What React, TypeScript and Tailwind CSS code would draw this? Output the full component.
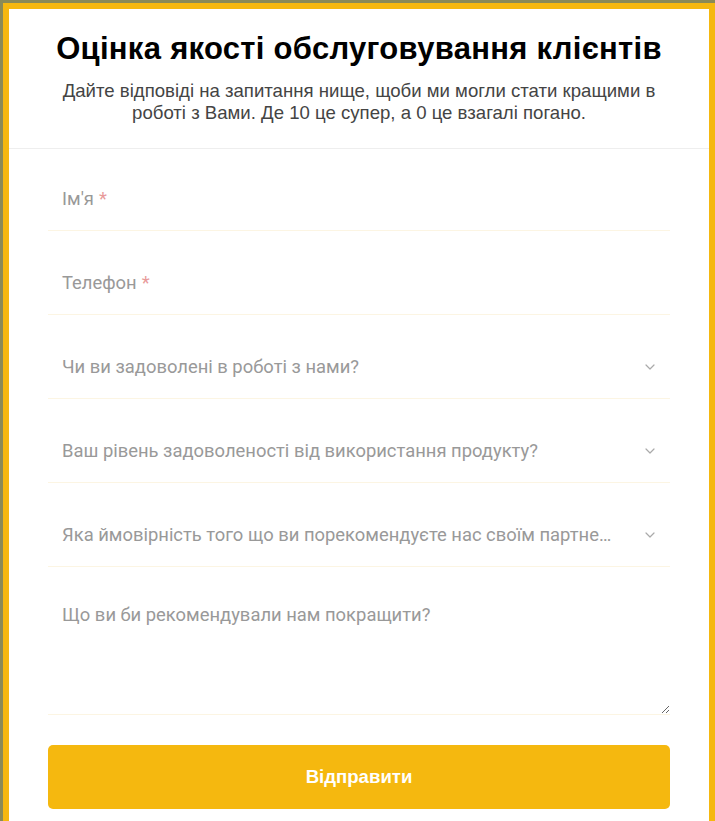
import { ChevronDown } from "lucide-react";

const selects = [
  "Чи ви задоволені в роботі з нами?",
  "Ваш рівень задоволеності від використання продукту?",
  "Яка ймовірність того що ви порекомендуєте нас своїм партнерам?",
];

function TextField({ label }: { label: string }) {
  return (
    <div className="h-[64px] flex items-center px-[14px] border-b border-[#fcf5e3] text-[18.4px] text-[#999] font-['Roboto',sans-serif]">
      {label} <span className="ml-[5px] text-[#e89a9a]">*</span>
    </div>
  );
}

function SelectField({ label }: { label: string }) {
  return (
    <div className="h-[64px] flex items-center gap-[22px] pl-[14px] pr-[12px] border-b border-[#fcf5e3] text-[18.4px] text-[#999] font-['Roboto',sans-serif]">
      <span className="flex-1 truncate">{label}</span>
      <ChevronDown className="w-[16px] h-[16px] text-[#aaa] shrink-0" strokeWidth={1.8} />
    </div>
  );
}

export default function App() {
  return (
    <div className="min-h-[821px] bg-[#8a8a56] pt-[3px] pl-[3px]">
      <div className="min-h-[818px] bg-white border-[6px] border-b-0 border-[#f5b80f]">
        <div className="pt-[21px] pb-[24px] border-b border-[#eeeeee] text-center font-['Liberation_Sans',Arial,sans-serif]">
          <h1 className="text-[31px] leading-[38px] font-bold text-black tracking-[0.3px]">
            Оцінка якості обслуговування клієнтів
          </h1>
          <p className="mt-[12px] text-[18.6px] leading-[22px] text-[#444] px-10">
            Дайте відповіді на запитання нище, щоби ми могли стати кращими в роботі з Вами. Де 10 це супер, а 0 це взагалі погано.
          </p>
        </div>
        <div className="mx-[39px] pt-[18px] flex flex-col gap-[20px]">
          <TextField label="Ім'я" />
          <TextField label="Телефон" />
          {selects.map((s) => (
            <SelectField key={s} label={s} />
          ))}
          <textarea
            className="block h-[128px] w-full px-[14px] pt-[15px] border-b border-[#fcf5e3] outline-none text-[18.4px] leading-[26px] text-[#333] placeholder:text-[#999] font-['Roboto',sans-serif]"
            placeholder="Що ви би рекомендували нам покращити?"
          />
          <button className="mt-[10px] h-[64px] w-full rounded-[5px] bg-[#f5b80f] text-white text-[18.6px] font-bold font-['Liberation_Sans',Arial,sans-serif]">
            Відправити
          </button>
        </div>
      </div>
    </div>
  );
}
